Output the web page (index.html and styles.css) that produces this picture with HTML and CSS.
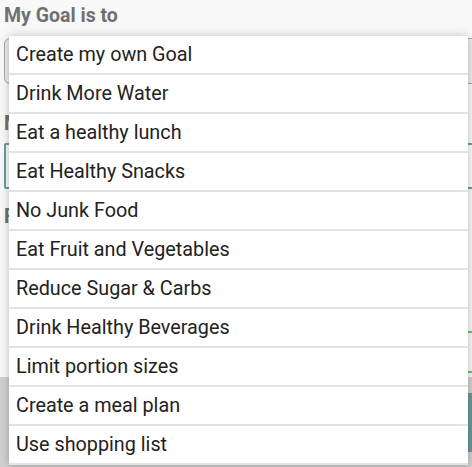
FILE: index.html
```html
<!DOCTYPE html>
<html>
<head>
<meta charset="utf-8">
<link rel="stylesheet" href="styles.css">
</head>
<body>
<div class="page">
  <div class="form">
    <div class="label">My Goal is to</div>
    <div class="select-box"><span class="caret">^</span></div>
    <div class="label label2">My Motivation</div>
    <div class="input-teal"></div>
    <div class="label label3">Frequency</div>
    <div class="spacer"></div>
    <div class="row-pair">
      <div class="gray-box"></div>
      <div class="green-box"></div>
    </div>
    <div class="bottom-bar">
      <div class="teal-btn"></div>
    </div>
  </div>
  <ul class="dropdown">
    <li>Create my own Goal</li>
    <li>Drink More Water</li>
    <li>Eat a healthy lunch</li>
    <li>Eat Healthy Snacks</li>
    <li>No Junk Food</li>
    <li>Eat Fruit and Vegetables</li>
    <li>Reduce Sugar &amp; Carbs</li>
    <li>Drink Healthy Beverages</li>
    <li>Limit portion sizes</li>
    <li>Create a meal plan</li>
    <li>Use shopping list</li>
  </ul>
</div>
</body>
</html>
```
FILE: styles.css
```css
html, body {
  margin: 0;
  padding: 0;
}
body {
  width: 472px;
  height: 467px;
  overflow: hidden;
  background: #f8f8f8;
  font-family: Roboto, "Liberation Sans", sans-serif;
}
.page {
  position: relative;
  width: 472px;
  height: 467px;
  overflow: hidden;
}
.form {
  display: flex;
  flex-direction: column;
  padding: 4px 0 0 4px;
}
.label {
  font-size: 19.5px;
  font-weight: bold;
  color: #707070;
  line-height: 24px;
  height: 24px;
}
.select-box {
  margin-top: 10px;
  height: 44px;
  width: 480px;
  border: 1px solid #a8a8a8;
  border-radius: 6px;
  background: #ececec;
  position: relative;
}
.caret {
  position: absolute;
  right: 18px;
  top: 2px;
  color: #555;
  font-size: 14px;
}
.label2 {
  margin-top: 28px;
}
.input-teal {
  margin-top: 7px;
  height: 46px;
  width: 470px;
  border: 2px solid #6b9a9a;
  border-radius: 2px;
  background: #fafafa;
  box-sizing: border-box;
}
.label3 {
  margin-top: 16px;
}
.spacer {
  height: 94px;
}
.row-pair {
  display: flex;
  justify-content: space-between;
  height: 44px;
  margin-left: 5px;
}
.gray-box {
  width: 200px;
  height: 40px;
  border: 1px solid #b5b5b5;
  border-radius: 4px;
  background: #ededed;
}
.green-box {
  width: 200px;
  height: 38px;
  margin-top: 8px;
  border-top: 2px solid #6cc070;
  border-bottom: 2px solid #6cc070;
}
.bottom-bar {
  margin: 10px 0 0 -4px;
  height: 90px;
  background: #cfcfcf;
  display: flex;
  justify-content: flex-end;
  padding-top: 16px;
  box-sizing: border-box;
}
.teal-btn {
  width: 200px;
  height: 59px;
  background: #6a9797;
}
.dropdown {
  position: absolute;
  left: 9px;
  top: 36px;
  width: 459px;
  margin: 0;
  padding: 0;
  list-style: none;
  background: #ffffff;
  box-shadow: 0 -2px 10px rgba(0, 0, 0, 0.12), 0 2px 6px rgba(0, 0, 0, 0.15);
}
.dropdown li {
  height: 37px;
  line-height: 38px;
  padding-left: 7px;
  font-size: 19.8px;
  color: #222222;
  border-bottom: 2px solid #e3e3e3;
}
```
